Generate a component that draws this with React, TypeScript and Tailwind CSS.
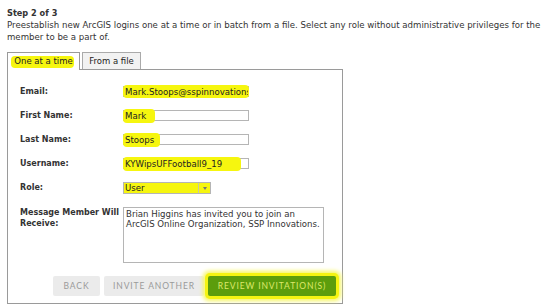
import React from 'react';

const fields = [
  { label: 'Email:', value: 'Mark.Stoops@sspinnovations.com', mark: 'full' },
  { label: 'First Name:', value: 'Mark', mark: 'w-[32px]' },
  { label: 'Last Name:', value: 'Stoops', mark: 'w-[37px]' },
  { label: 'Username:', value: 'KYWipsUFFootball9_19', mark: 'w-[118px]' },
];

const Marker = ({ className }: { className: string }) => (
  <span className={`absolute bg-[#f6f60f] rounded-sm ${className}`} />
);

export default function App() {
  return (
    <div className="w-[550px] h-[306px] bg-white overflow-hidden text-[#333] font-['DejaVu_Sans',sans-serif] text-[8px] leading-[12px]">
      <div className="pt-[7px] pl-[7px] pr-[6px]">
        <div className="font-bold text-[8.2px]">Step 2 of 3</div>
        <p className="text-[8.6px]">
          Preestablish new ArcGIS logins one at a time or in batch from a file. Select any role without administrative privileges for the member to be a part of.
        </p>

        {/* Tabs */}
        <div className="mt-[9px] flex items-end gap-[2px] relative z-10">
          <div className="relative h-[18px] w-[73px] border border-b-0 border-[#9a9a9a] bg-white flex items-center justify-center -mb-px pb-px text-[8.5px]">
            <Marker className="left-[3px] right-[5px] top-[3px] bottom-[2px]" />
            <span className="relative text-[#222]">One at a time</span>
          </div>
          <div className="h-[17px] w-[59px] border border-b-0 border-[#aaa] bg-[#f2f2f2] flex items-center justify-center text-[8.5px]">
            <span className="text-[#222]">From a file</span>
          </div>
        </div>

        {/* Panel */}
        <div className="w-[336px] h-[235px] border border-[#9a9a9a] pl-[12px] pt-[16px]">
          <div className="flex flex-col gap-[13px]">
            {fields.map((f) => (
              <div key={f.label} className="flex items-center h-[11px]">
                <div className="w-[103px] font-bold">{f.label}</div>
                <div className="relative w-[126px] h-[11px] border border-[#b5b5b5] bg-white">
                  {f.mark === 'full' ? (
                    <Marker className="-left-px -right-px -top-[2px] -bottom-[2px]" />
                  ) : (
                    <Marker className={`-left-px -top-[2px] -bottom-[3px] ${f.mark}`} />
                  )}
                  <div className="relative pl-[1px] leading-[10px] whitespace-nowrap overflow-hidden text-[8.6px] text-[#222]">{f.value}</div>
                </div>
              </div>
            ))}
            <div className="flex items-center h-[12px]">
              <div className="w-[103px] font-bold">Role:</div>
              <div className="relative w-[88px] h-[12px] border border-[#b5b5b5] bg-[#f6f60f] flex">
                <div className="flex-1 pl-[1px] leading-[10px] text-[8.6px] text-[#222]">User</div>
                <div className="w-[12px] border-l border-[#c8c8a0] flex items-center justify-center">
                  <span className="w-0 h-0 border-l-[2px] border-r-[2px] border-t-[3px] border-l-transparent border-r-transparent border-t-[#777]" />
                </div>
              </div>
            </div>
          </div>

          <div className="flex mt-[13px]">
            <div className="w-[103px] font-bold leading-[11px]">
              Message Member Will
              <br />
              Receive:
            </div>
            <div className="w-[201px] h-[56px] border border-[#b5b5b5] px-[2px] pt-[1px] leading-[10px] text-[8.6px] text-[#333]">
              Brian Higgins has invited you to join an ArcGIS Online Organization, SSP Innovations.
            </div>
          </div>

          <div className="flex gap-[4px] ml-[33px] mt-[13px] font-['Lato',sans-serif] text-[8.5px] tracking-[0.9px]">
            <button className="w-[47px] h-[20px] rounded-[2px] bg-[#ebebeb] text-[#9a9a9a] uppercase">Back</button>
            <button className="w-[100px] h-[20px] rounded-[2px] bg-[#ebebeb] text-[#9a9a9a] uppercase">Invite Another</button>
            <button className="w-[128px] h-[20px] rounded-[2px] bg-[#5c9d0c] text-[#dce86a] uppercase shadow-[0_0_0_3px_#f4f412,0_0_4px_5px_#f6f660]">
              Review Invitation(s)
            </button>
          </div>
        </div>
      </div>
    </div>
  );
}
